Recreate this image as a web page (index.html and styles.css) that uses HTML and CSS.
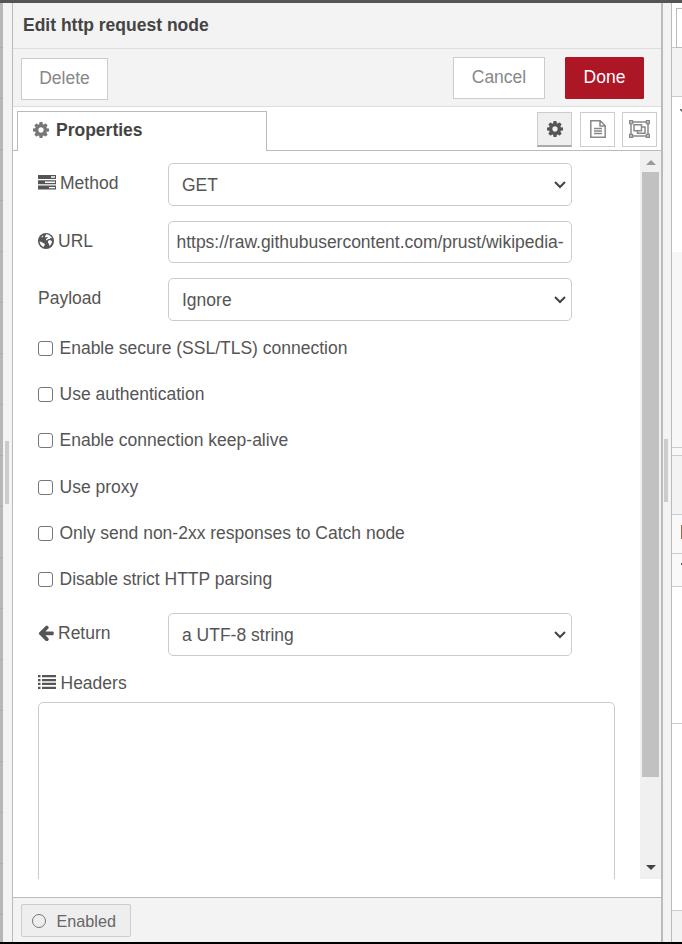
FILE: index.html
```html
<!DOCTYPE html>
<html lang="en">
<head>
<meta charset="utf-8">
<title>Edit http request node</title>
<link rel="stylesheet" href="styles.css">
</head>
<body>
<svg class="defs" width="0" height="0">
  <symbol id="cog" viewBox="0 -128 1536 1536"><path d="M1024 640q0-106-75-181t-181-75-181 75-75 181 75 181 181 75 181-75 75-181zm512-109v222q0 12-8 23t-20 13l-185 28q-19 54-39 91 35 50 107 138 10 12 10 25t-9 23q-27 37-99 108t-94 71q-12 0-26-9l-138-108q-44 23-91 38-16 136-29 186-7 28-36 28h-222q-14 0-24.500-8.500t-11.500-21.500l-28-184q-49-16-90-37l-141 107q-10 9-25 9-14 0-25-11-126-114-165-168-7-10-7-23 0-12 8-23 15-21 51-66.500t54-70.500q-27-50-41-99l-183-27q-13-2-21-12.500t-8-23.500v-222q0-12 8-23t19-13l186-28q14-46 39-92-40-57-107-138-10-12-10-24 0-10 9-23 26-36 98.500-107.500t94.500-71.500q13 0 26 10l138 107q44-23 91-38 16-136 29-186 7-28 36-28h222q14 0 24.500 8.500t11.500 21.500l28 184q49 16 90 37l142-107q9-9 24-9 13 0 25 10 129 119 165 170 7 8 7 22 0 12-8 23-15 21-51 66.500t-54 70.500q26 50 41 98l183 28q13 2 21 12.500t8 23.500z"/></symbol>
</svg>
<div class="topbar"></div>
<div class="workspace">
  <div class="canvas"></div>
  <div class="gutter"><span class="grip"></span></div>
  <main class="tray">
    <header class="title">Edit http request node</header>
    <div class="toolbar">
      <button class="btn delete">Delete</button>
      <button class="btn cancel">Cancel</button>
      <button class="btn done">Done</button>
    </div>
    <div class="tabs">
      <div class="tab"><svg class="cog" width="16" height="16"><use href="#cog"/></svg>Properties</div>
      <div class="tab-rest">
        <button class="tool selected"><svg width="16" height="16"><use href="#cog"/></svg></button>
        <button class="tool"><svg width="16" height="18" viewBox="0 0 16 18" fill="none" stroke="#888" stroke-width="1.5"><path d="M.8.8h9.400l5 5v11.400H.8zM10 1v5h5M4 8.500h8M4 11h8M4 13.500h8"/></svg></button>
        <button class="tool"><svg width="21" height="18" viewBox="0 0 21 18" fill="none" stroke="#888" stroke-width="1.500"><path d="M3.500 2h14M3.500 16h14M2 3.500v11M19 3.500v11M.7.7h2.800v2.800H.7zM17.500.7h2.800v2.800h-2.800zM.7 14.500h2.800v2.800H.7zM17.500 14.500h2.800v2.800h-2.800zM5 4.700h7.500v6H5zM12.500 7H16v6.300H8.500v-2.600"/></svg></button>
      </div>
    </div>
    <div class="body">
      <form class="form">
        <div class="row method"><label><svg class="lift" width="18" height="15" viewBox="0 0 18 15"><path fill="#555" d="M0 0h18v4H0zM0 5.300h18v4H0zM0 10.600h18v4H0z"/><path fill="#fff" d="M13 1.300h4v1.400h-4zM7 6.600h10V8H7zM11 11.900h6v1.400h-6z"/></svg>Method</label>
          <div class="field select">GET<svg width="12" height="8" viewBox="0 0 12 8"><path d="M1 1l5 5 5-5"/></svg></div></div>
        <div class="row url"><label><svg width="16" height="16" viewBox="0 0 16 16"><circle cx="8" cy="8" r="8" fill="#555"/><path fill="#fff" d="M8.200 1.300l2.600.5 2.400 1.900.8 1.600-1.500-.2-1 .9-1.700.2-.9 1.200-1-.6.6-1.300 1.400-.7-.7-.8-1.600.5-.6-1.100zM10.200 7.700l1.600-.7 1.700.7.6 1.300-1.500 3-1.400.8-.3-2.100-1-1.300zM1.500 8.600l2 .3 2 1.300 1.500.8-.4 1.500-1 .6.300 1.100-1.500-.7-1.900-2zM3.200 4l1.700-1.600.5.700-1.200 1.500z"/></svg>URL</label>
          <div class="field input"><span>https://raw.githubusercontent.com/prust/wikipedia-</span></div></div>
        <div class="row payload"><label>Payload</label>
          <div class="field select">Ignore<svg width="12" height="8" viewBox="0 0 12 8"><path d="M1 1l5 5 5-5"/></svg></div></div>
        <div class="checks">
          <label><i class="box"></i>Enable secure (SSL/TLS) connection</label>
          <label><i class="box"></i>Use authentication</label>
          <label><i class="box"></i>Enable connection keep-alive</label>
          <label><i class="box"></i>Use proxy</label>
          <label><i class="box"></i>Only send non-2xx responses to Catch node</label>
          <label><i class="box"></i>Disable strict HTTP parsing</label>
        </div>
        <div class="row return"><label><svg width="16" height="16" viewBox="110 130 1580 1580"><path fill="#555" d="M1664 896v128q0 53-32.500 90.500t-84.500 37.500h-704l293 294q38 36 38 90t-38 90l-75 76q-37 37-90 37-52 0-91-37l-651-652q-37-37-37-90 0-52 37-91l651-650q38-38 91-38 52 0 90 38l75 74q38 38 38 91t-38 91l-293 293h704q52 0 84.500 37.500t32.500 90.500z"/></svg>Return</label>
          <div class="field select">a UTF-8 string<svg width="12" height="8" viewBox="0 0 12 8"><path d="M1 1l5 5 5-5"/></svg></div></div>
        <div class="headers"><svg class="lift" width="18" height="14" viewBox="0 0 18 14"><path fill="#555" d="M0 0h2.500v2.300H0zM4 0h14v2.300H4zM0 3.900h2.500v2.300H0zM4 3.900h14v2.300H4zM0 7.800h2.500v2.300H0zM4 7.800h14v2.300H4zM0 11.700h2.500V14H0zM4 11.700h14V14H4z"/></svg>Headers</div>
        <div class="list"></div>
      </form>
      <div class="scroll"><span class="arrow up"></span><span class="thumb"></span><span class="arrow down"></span></div>
    </div>
    <footer class="footer"><button class="enabled"><i class="ring"></i>Enabled</button></footer>
  </main>
  <div class="gutter right"><span class="grip"></span></div>
  <aside class="sidebar">
    <div class="side-tabs"><span class="side-tab"></span></div>
    <div class="side-tools"></div>
    <div class="side-top"><svg width="4" height="4" viewBox="0 0 4 4"><path d="M0 0l4 4" stroke="#555" stroke-width="1.500"/></svg></div>
    <div class="side-mid"></div>
    <div class="side-split"></div>
    <div class="side-bar"></div>
    <div class="side-item"><span class="mark"></span></div>
    <div class="side-item second"><span class="dash"></span></div>
    <div class="side-blank"></div>
    <div class="side-low"></div>
    <div class="side-foot"></div>
  </aside>
</div>
<div class="bottombar"></div>
</body>
</html>
```
FILE: styles.css
```css
* { box-sizing: border-box; }
body { margin: 0; height: 944px; overflow: hidden; display: flex; flex-direction: column; background: #fff; color: #555; font: 17.500px/22px "Liberation Sans", Arial, sans-serif; }
button { font: inherit; border-radius: 0; padding: 0; }
svg { flex: none; }
.defs { position: absolute; }
.topbar { height: 3px; background: #555; flex: none; }
.bottombar { height: 2px; background: #000; flex: none; }
.workspace { flex: 1; display: flex; min-height: 0; }
.canvas { width: 3px; background: repeating-linear-gradient(#b7b7b7 0 44px, #aaa 44px 45px, #b7b7b7 45px 51px); }
.gutter { width: 10px; background: #f3f3f3; border-right: 1px solid #bbb; display: flex; padding: 438px 0 0 2px; }
.gutter.right { padding-top: 436px; padding-left: 1px; width: 9px; }
.grip { width: 4px; height: 63px; background: #ccc; }
.tray { width: 650px; display: flex; flex-direction: column; border-right: 2px solid #bbb; }
.title { height: 46px; flex: none; background: #f3f3f3; border-bottom: 1px solid #ddd; padding: 11px 10px; font-weight: bold; color: #444; }
.toolbar { height: 58px; flex: none; background: #f3f3f3; border-bottom: 1px solid #ddd; display: flex; padding: 8px 17px 0 8px; }
.btn { height: 42px; border: 1px solid #ccc; background: #fff; color: #888; padding-bottom: 2px; }
.delete { width: 87px; margin-top: 1px; }
.cancel { width: 92px; margin-left: auto; margin-right: 20px; }
.done { width: 79px; background: #ad1625; border-color: #ad1625; color: #fff; border-radius: 1px; }
.tabs { height: 44px; flex: none; display: flex; padding-left: 4px; background: linear-gradient(#bbb, #bbb) left bottom / 4px 1px no-repeat; }
.tab { width: 250px; margin-top: 4px; border: 1px solid #bbb; border-bottom: 0; display: flex; align-items: center; gap: 7px; padding: 0 0 4px 15px; font-weight: bold; color: #444; }
.cog { fill: #777; }
.tab-rest { flex: 1; border-bottom: 1px solid #bbb; display: flex; justify-content: flex-end; gap: 7px; padding: 5px 4px 0 0; }
.tool { width: 35px; height: 35px; border: 1px solid #ccc; background: #fff; display: flex; align-items: center; justify-content: center; padding-bottom: 1px; }
.tool.selected { background: #efefef; border-bottom: 2px solid #aaa; fill: #555; margin-right: 1px; }
.body { height: 728px; flex: none; display: flex; overflow: hidden; }
.form { width: 627px; margin: 0; padding: 12px 0 0 25px; }
.row { display: flex; height: 43px; }
.row > label { width: 130px; display: flex; align-items: center; height: 40px; gap: 4px; }
.lift { margin-bottom: 2px; }
.url { margin-top: 15px; height: 42px; }
.payload { margin-top: 15px; }
.field { width: 404px; border: 1px solid #ccc; border-radius: 5px; display: flex; align-items: center; }
.select { justify-content: space-between; padding: 0 5px 0 13px; }
.select svg { fill: none; stroke: #444; stroke-width: 2; }
.input { padding: 0 7.500px; white-space: nowrap; overflow: hidden; letter-spacing: -.02px; }
.checks { padding-top: 16px; }
.checks label { display: flex; height: 22px; margin-bottom: 24.200px; align-items: center; gap: 6.500px; }
.box { width: 15px; height: 15px; border: 1px solid #767676; border-radius: 3px; margin-top: 1px; }
.return { margin-top: -1px; }
.headers { display: flex; align-items: center; gap: 4.500px; height: 22px; margin-top: 16px; }
.list { width: 577px; height: 200px; margin-top: 8px; border: 1px solid #ccc; border-radius: 5px; }
.scroll { width: 21px; background: #f0f0f0; display: flex; flex-direction: column; align-items: center; }
.arrow { border: 5px solid transparent; height: 0; }
.up { border-top: 0; border-bottom-color: #999; margin-top: 9px; }
.thumb { width: 17px; height: 605px; background: #c1c1c1; margin: 7px 0 0 0; }
.down { border-bottom: 0; border-top-color: #444; margin-top: 88px; }
.footer { margin-top: auto; height: 45px; background: #f3f3f3; border-top: 1px solid #bbb; padding: 6px 8px; }
.enabled { width: 110px; height: 33px; border: 1px solid #ccc; border-radius: 2px; background: #eee; color: #666; font-size: 16.200px; display: flex; align-items: center; padding-left: 9.500px; gap: 11px; }
.ring { width: 14px; height: 14px; border: 1.500px solid #777; border-radius: 50%; }
.sidebar { flex: 1; overflow: hidden; display: flex; flex-direction: column; background: #fff; }
.sidebar > div { flex: none; border-bottom: 1px solid #ccc; }
.side-tabs { height: 45px; padding: 5px 0 0 4px; }
.side-tab { display: block; width: 20px; height: 40px; border: 1px solid #bbb; background: #fff; }
.side-tools { height: 49px; background: #f3f3f3; }
.sidebar .side-top { height: 155px; border: 0; padding: 10px 0 0 8px; line-height: 0; }
.side-mid { height: 196px; background: #f7f7f7; }
.side-split { height: 8px; background: #f7f7f7; }
.side-bar { height: 59px; background: #f3f3f3; }
.side-item { height: 39px; background: #f9f9f9; padding: 10px 0 0 9px; }
.mark { display: block; width: 2px; height: 14px; background: #a06a40; }
.side-item.second { height: 33px; padding: 9px 0 0 9px; }
.dash { display: block; width: 2px; height: 2px; background: #555; }
.side-blank { height: 137px; }
.side-low { height: 187px; }
.sidebar .side-foot { flex: 1; background: #f3f3f3; border: 0; }
```
